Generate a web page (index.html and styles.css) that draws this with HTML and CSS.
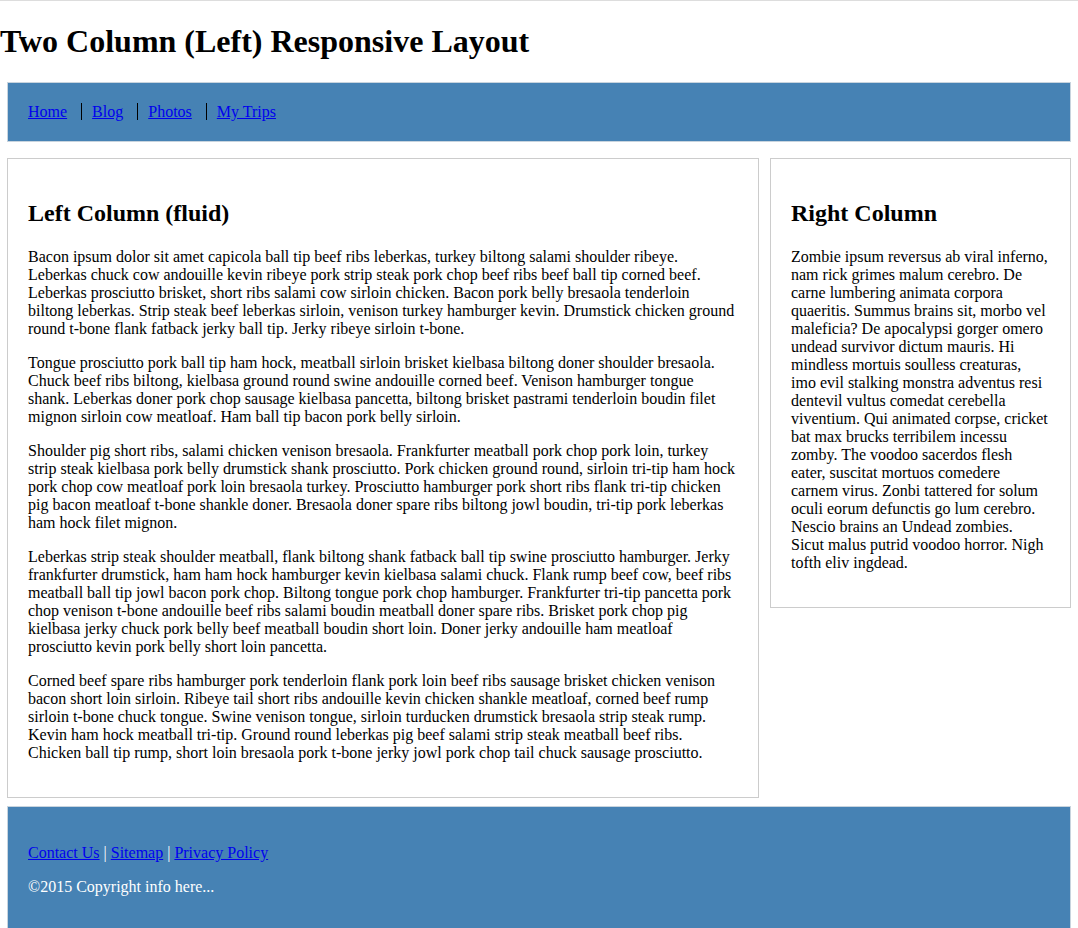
FILE: index.html
```html
<!DOCTYPE html>
<html lang="en">
<head>
<meta charset="utf-8">
<title>Two Column (Left) Responsive Layout</title>
<link rel="stylesheet" href="styles.css">
</head>
<body>
<h1 class="page-title">Two Column (Left) Responsive Layout</h1>
<div class="wrapper">
  <nav class="nav">
    <ul class="nav-list">
      <li class="nav-item"><a href="#">Home</a></li>
      <li class="nav-item"><a href="#">Blog</a></li>
      <li class="nav-item"><a href="#">Photos</a></li>
      <li class="nav-item"><a href="#">My Trips</a></li>
    </ul>
  </nav>
  <div class="columns">
    <main class="col col-left">
      <h2 class="col-title">Left Column (fluid)</h2>
      <p>Bacon ipsum dolor sit amet capicola ball tip beef ribs leberkas, turkey biltong salami shoulder ribeye. Leberkas chuck cow andouille kevin ribeye pork strip steak pork chop beef ribs beef ball tip corned beef. Leberkas prosciutto brisket, short ribs salami cow sirloin chicken. Bacon pork belly bresaola tenderloin biltong leberkas. Strip steak beef leberkas sirloin, venison turkey hamburger kevin. Drumstick chicken ground round t-bone flank fatback jerky ball tip. Jerky ribeye sirloin t-bone.</p>
      <p>Tongue prosciutto pork ball tip ham hock, meatball sirloin brisket kielbasa biltong doner shoulder bresaola. Chuck beef ribs biltong, kielbasa ground round swine andouille corned beef. Venison hamburger tongue shank. Leberkas doner pork chop sausage kielbasa pancetta, biltong brisket pastrami tenderloin boudin filet mignon sirloin cow meatloaf. Ham ball tip bacon pork belly sirloin.</p>
      <p>Shoulder pig short ribs, salami chicken venison bresaola. Frankfurter meatball pork chop pork loin, turkey strip steak kielbasa pork belly drumstick shank prosciutto. Pork chicken ground round, sirloin tri-tip ham hock pork chop cow meatloaf pork loin bresaola turkey. Prosciutto hamburger pork short ribs flank tri-tip chicken pig bacon meatloaf t-bone shankle doner. Bresaola doner spare ribs biltong jowl boudin, tri-tip pork leberkas ham hock filet mignon.</p>
      <p>Leberkas strip steak shoulder meatball, flank biltong shank fatback ball tip swine prosciutto hamburger. Jerky frankfurter drumstick, ham ham hock hamburger kevin kielbasa salami chuck. Flank rump beef cow, beef ribs meatball ball tip jowl bacon pork chop. Biltong tongue pork chop hamburger. Frankfurter tri-tip pancetta pork chop venison t-bone andouille beef ribs salami boudin meatball doner spare ribs. Brisket pork chop pig kielbasa jerky chuck pork belly beef meatball boudin short loin. Doner jerky andouille ham meatloaf prosciutto kevin pork belly short loin pancetta.</p>
      <p>Corned beef spare ribs hamburger pork tenderloin flank pork loin beef ribs sausage brisket chicken venison bacon short loin sirloin. Ribeye tail short ribs andouille kevin chicken shankle meatloaf, corned beef rump sirloin t-bone chuck tongue. Swine venison tongue, sirloin turducken drumstick bresaola strip steak rump. Kevin ham hock meatball tri-tip. Ground round leberkas pig beef salami strip steak meatball beef ribs. Chicken ball tip rump, short loin bresaola pork t-bone jerky jowl pork chop tail chuck sausage prosciutto.</p>
    </main>
    <aside class="col col-right">
      <h2 class="col-title">Right Column</h2>
      <p>Zombie ipsum reversus ab viral inferno, nam rick grimes malum cerebro. De carne lumbering animata corpora quaeritis. Summus brains sit, morbo vel maleficia? De apocalypsi gorger omero undead survivor dictum mauris. Hi mindless mortuis soulless creaturas, imo evil stalking monstra adventus resi dentevil vultus comedat cerebella viventium. Qui animated corpse, cricket bat max brucks terribilem incessu zomby. The voodoo sacerdos flesh eater, suscitat mortuos comedere carnem virus. Zonbi tattered for solum oculi eorum defunctis go lum cerebro. Nescio brains an Undead zombies. Sicut malus putrid voodoo horror. Nigh tofth eliv ingdead.</p>
    </aside>
  </div>
  <footer class="footer">
    <p><a href="#">Contact Us</a> | <a href="#">Sitemap</a> | <a href="#">Privacy Policy</a></p>
    <p>&copy;2015 Copyright info here...</p>
  </footer>
</div>
</body>
</html>
```

FILE: styles.css
```css
html, body {
  background: #fff;
}
body {
  margin: 0;
  border-top: 1px solid #dddddd;
  font-family: "Liberation Serif", "Times New Roman", serif;
  font-size: 16px;
  color: #000;
}
a {
  color: #0000ee;
}
.page-title {
  font-size: 32px;
  margin: 22px 0 22px;
  line-height: 37px;
}
.wrapper {
  padding: 0 7px;
}
.nav {
  background: #4682b4;
  border: 1px solid #c8d4de;
  padding: 20px;
}
.nav-list {
  list-style: none;
  margin: 0;
  padding: 0;
  line-height: 18px;
}
.nav-item {
  display: inline;
  padding: 0 10px;
  border-left: 1px solid #000;
}
.nav-item:first-child {
  padding-left: 0;
  border-left: none;
}
.columns {
  display: flex;
  align-items: flex-start;
  gap: 11px;
  margin-top: 16px;
}
.col {
  box-sizing: border-box;
  border: 1px solid #cccccc;
  padding: 0 20px;
  background: #fff;
}
.col-left {
  flex: 1;
  min-width: 0;
}
.col-right {
  width: 301px;
  flex: none;
  padding-right: 22px;
}
.col-title {
  font-size: 24px;
  margin: 41px 0 21px;
  line-height: 27px;
}
.col p {
  margin: 0 0 16px;
  line-height: 18px;
}
.col p:last-child {
  margin-bottom: 35px;
}
.footer {
  margin-top: 8px;
  background: #4682b4;
  border: 1px solid #c8d4de;
  padding: 37px 20px 36px;
  color: #fff;
}
.footer p {
  margin: 0 0 16px;
  line-height: 18px;
}
.footer p:last-child {
  margin-bottom: 0;
}
```
